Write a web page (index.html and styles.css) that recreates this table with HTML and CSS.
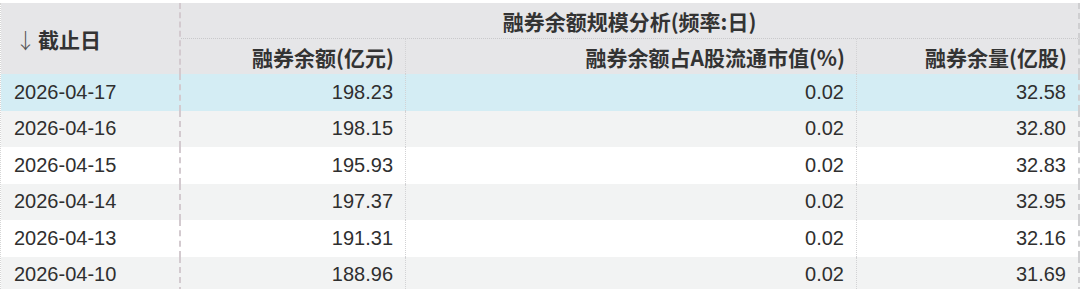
FILE: index.html
```html
<!DOCTYPE html>
<html lang="zh">
<head>
<meta charset="utf-8">
<link rel="stylesheet" href="styles.css">
</head>
<body>
<div class="grid">
  <div class="hcell hdate"><span class="arrow">↓</span>截止日</div>
  <div class="hcell htitle">融券余额规模分析(频率:日)</div>
  <div class="hcell hsub c2">融券余额(亿元)</div>
  <div class="hcell hsub c3">融券余额占A股流通市值(%)</div>
  <div class="hcell hsub c4">融券余量(亿股)</div>

  <div class="row sel"><div class="cell date">2026-04-17</div><div class="cell num c2">198.23</div><div class="cell num c3">0.02</div><div class="cell num c4">32.58</div></div>
  <div class="row alt"><div class="cell date">2026-04-16</div><div class="cell num c2">198.15</div><div class="cell num c3">0.02</div><div class="cell num c4">32.80</div></div>
  <div class="row"><div class="cell date">2026-04-15</div><div class="cell num c2">195.93</div><div class="cell num c3">0.02</div><div class="cell num c4">32.83</div></div>
  <div class="row alt"><div class="cell date">2026-04-14</div><div class="cell num c2">197.37</div><div class="cell num c3">0.02</div><div class="cell num c4">32.95</div></div>
  <div class="row"><div class="cell date">2026-04-13</div><div class="cell num c2">191.31</div><div class="cell num c3">0.02</div><div class="cell num c4">32.16</div></div>
  <div class="row alt"><div class="cell date">2026-04-10</div><div class="cell num c2">188.96</div><div class="cell num c3">0.02</div><div class="cell num c4">31.69</div></div>
</div>
</body>
</html>
```

FILE: styles.css
```css
html, body {
  margin: 0;
  padding: 0;
  background: #ffffff;
}
body {
  padding-top: 3px;
  overflow: hidden;
}
.grid {
  display: grid;
  width: 1079px;
  grid-template-columns: 180px 225px 451px 223px;
  grid-template-rows: 36px 35px repeat(6, 36.5px);
  border-left: 1px dotted #d6d6d6;
  box-sizing: border-box;
  color: #333333;
}
.row {
  display: contents;
}
.hcell {
  background: #e6e6e8;
  font-family: "Noto Sans CJK SC", "Liberation Sans", sans-serif;
  font-weight: 700;
  font-size: 21px;
  color: #333333;
  display: flex;
  align-items: center;
  box-sizing: border-box;
}
.hdate {
  grid-row: span 2;
  padding-left: 14px;
  border-right: 2px dashed #d3cacf;
}
.arrow {
  font-family: "Noto Sans CJK SC", "DejaVu Sans", sans-serif;
  font-weight: 300;
  font-size: 21px;
  margin-right: 2px;
  color: #555555;
}
.htitle {
  grid-column: span 3;
  justify-content: center;
  border-bottom: 1px dotted #c9c9cb;
  border-right: 2px dashed #cfcfd1;
}
.hsub {
  justify-content: flex-end;
  padding-right: 11px;
}
.c2, .c3 {
  border-right: 1px dotted #d2d2d4;
}
.c4 {
  border-right: 2px dashed #cfcfd1;
}
.cell {
  font-family: "Liberation Sans", Arial, sans-serif;
  font-size: 20px;
  color: #2f2f2f;
  display: flex;
  align-items: center;
  box-sizing: border-box;
  background: #ffffff;
}
.alt .cell {
  background: #f2f3f3;
}
.sel .cell {
  background: #d4edf4;
}
.date {
  padding-left: 13px;
  border-right: 2px dashed #d3cacf;
}
.num {
  justify-content: flex-end;
  padding-right: 12px;
}
```
